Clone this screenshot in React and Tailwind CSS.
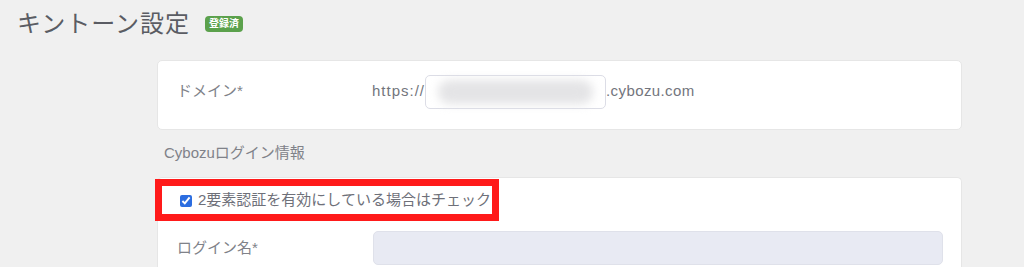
export default function App() {
  const font = { fontFamily: '"Liberation Sans", "Noto Sans CJK JP", sans-serif' }
  return (
    <div className="w-[1024px] h-[267px] overflow-hidden bg-[#f0f0f0]" style={font}>
      <div className="flex items-center h-[48px] pl-[17px] pb-[1px]">
        <h1 className="text-[24px] leading-none tracking-[1px] text-[#5a5c63]">キントーン設定</h1>
        <span className="ml-[15px] mt-[1px] rounded-[4px] bg-[#5ba14c] px-[4px] py-[2px] text-[10px] font-bold leading-[12px] text-white">
          登録済
        </span>
      </div>

      <div className="ml-[157px] w-[805px] mt-[12px]">
        <div className="flex items-center h-[70px] rounded-[5px] border border-[#e6e6e6] bg-white pl-[19px] pb-[7px]">
          <div className="w-[195px] text-[15px] text-[#808289]">ドメイン*</div>
          <div className="flex items-center text-[15px] text-[#73757d]">
            <span className="tracking-[1px]">https://</span>
            <div className="flex h-[34px] w-[181px] items-center rounded-[5px] border border-[#dcdde6] bg-white px-[12px]">
              <div className="h-[24px] w-full rounded-full bg-[#e4e4e6] blur-[5px]" />
            </div>
            <span className="tracking-[0.4px]">.cybozu.com</span>
          </div>
        </div>

        <div className="pl-[7px] pt-[14px] pb-[15px] text-[15px] leading-[18px] text-[#808289]">Cybozuログイン情報</div>

        <div className="relative rounded-t-[5px] border border-b-0 border-[#e6e6e6] bg-white h-[100px]">
          <div className="flex items-center h-[44px] pl-[22px] pt-[1px]">
            <input type="checkbox" defaultChecked className="h-[12px] w-[12px] accent-[#2c6de0]" />
            <span className="ml-[6px] text-[15px] text-[#6e7079]">2要素認証を有効にしている場合はチェック</span>
          </div>
          <div className="flex items-center mt-[9px] pl-[19px]">
            <div className="w-[196px] text-[15px] text-[#808289]">ログイン名*</div>
            <div className="h-[34px] w-[570px] rounded-[5px] border border-[#dfe1ea] bg-[#e8eaf3]" />
          </div>
          <div className="absolute left-[-3px] top-[1px] h-[42px] w-[344px] border-[7px] border-[#ff1a1a]" />
        </div>
      </div>
    </div>
  )
}
